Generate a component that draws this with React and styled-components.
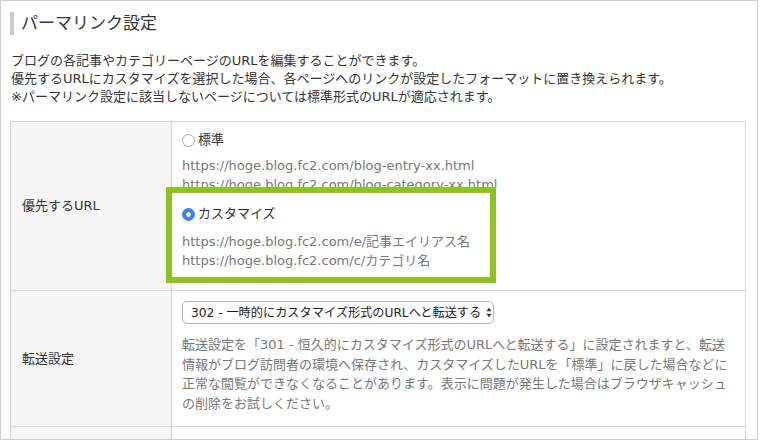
import React from 'react';
import styled, { createGlobalStyle, css } from 'styled-components';

const GlobalStyle = createGlobalStyle`
  body {
    margin: 0;
    background: #fff;
    color: #333;
    font-family: "DejaVu Sans", "Noto Sans CJK JP", sans-serif;
  }
`;

const Frame = styled.div`
  width: 758px;
  height: 440px;
  box-sizing: border-box;
  border: 1px solid #cdcdcd;
  padding: 11px 12px 0 9px;
  overflow: hidden;
`;

const Title = styled.h1`
  display: flex;
  align-items: center;
  gap: 7px;
  margin: 0;
  font-size: 17px;
  font-weight: normal;
  line-height: 23px;
  color: #333;

  &::before {
    content: '';
    width: 4px;
    height: 23px;
    background: #cccccc;
  }
`;

const Intro = styled.p`
  margin: 17px 0 0 1px;
  font-size: 13px;
  line-height: 18px;
`;

const Table = styled.table`
  width: 736px;
  margin-top: 15px;
  border-collapse: collapse;
  table-layout: fixed;
`;

const LabelCell = styled.th`
  width: 161px;
  box-sizing: border-box;
  padding: 0 11px 3px;
  border: 1px solid #d6d6d6;
  background: #f5f5f5;
  text-align: left;
  vertical-align: middle;
  font-size: 13px;
  font-weight: normal;
  color: #333;
`;

const ValueCell = styled.td`
  padding: ${({ $pad }) => $pad};
  border: 1px solid #d6d6d6;
  vertical-align: top;
`;

const Option = styled.div`
  position: relative;
  z-index: 0;
  margin-top: ${({ $gap }) => $gap || 0}px;

  ${({ $highlight }) =>
    $highlight &&
    css`
      &::before {
        content: '';
        position: absolute;
        left: -16px;
        top: -17px;
        width: 330px;
        height: 96px;
        box-sizing: border-box;
        border: 6px solid #8dc21f;
        background: #fff;
        z-index: -1;
      }
    `}
`;

const RadioLabel = styled.label`
  display: flex;
  align-items: center;
  gap: 3px;
  font-size: 13px;
  line-height: 20px;
  color: #333;
`;

const Radio = styled.input.attrs({ type: 'radio' })`
  appearance: none;
  width: 13px;
  height: 13px;
  margin: 0;
  border: 1px solid #a8a8a8;
  border-radius: 50%;
  background: #fff;

  &:checked {
    border-color: #3a82f7;
    background: radial-gradient(circle, #fff 0 2px, #3a82f7 2.6px);
  }
`;

const Urls = styled.div`
  margin-top: ${({ $gap }) => $gap}px;
  font-size: 13px;
  line-height: 19px;
  color: #777;
`;

const SelectWrap = styled.div`
  position: relative;
  display: inline-block;
`;

const Select = styled.select`
  appearance: none;
  height: 23px;
  padding: 0 10px 0 8px;
  border: 1px solid #b3b3b3;
  border-radius: 5px;
  background: #fff;
  font-family: inherit;
  font-size: 12.2px;
  color: #222;
`;

const Arrows = styled.svg`
  position: absolute;
  right: 2px;
  top: 6px;
  pointer-events: none;
`;

const Note = styled.p`
  margin: 11px 0 0;
  font-size: 13px;
  line-height: 19.5px;
  color: #777;
`;

const App = () => (
  <>
    <GlobalStyle />
    <Frame>
      <Title>パーマリンク設定</Title>
      <Intro>
        ブログの各記事やカテゴリーページのURLを編集することができます。
        <br />
        優先するURLにカスタマイズを選択した場合、各ページへのリンクが設定したフォーマットに置き換えられます。
        <br />
        ※パーマリンク設定に該当しないページについては標準形式のURLが適応されます。
      </Intro>
      <Table>
        <tbody>
          <tr>
            <LabelCell>優先するURL</LabelCell>
            <ValueCell $pad="8px 16px 20px 10px">
              <Option>
                <RadioLabel>
                  <Radio name="permalink" value="default" />
                  標準
                </RadioLabel>
                <Urls $gap={6}>
                  https://hoge.blog.fc2.com/blog-entry-xx.html
                  <br />
                  https://hoge.blog.fc2.com/blog-category-xx.html
                </Urls>
              </Option>
              <Option $gap={10} $highlight>
                <RadioLabel>
                  <Radio name="permalink" value="custom" defaultChecked />
                  カスタマイズ
                </RadioLabel>
                <Urls $gap={8}>
                  https://hoge.blog.fc2.com/e/記事エイリアス名
                  <br />
                  https://hoge.blog.fc2.com/c/カテゴリ名
                </Urls>
              </Option>
            </ValueCell>
          </tr>
          <tr>
            <LabelCell>転送設定</LabelCell>
            <ValueCell $pad="10px 16px 13px 10px">
              <SelectWrap>
                <Select defaultValue="302">
                  <option value="302">302 - 一時的にカスタマイズ形式のURLへと転送する</option>
                  <option value="301">301 - 恒久的にカスタマイズ形式のURLへと転送する</option>
                </Select>
                <Arrows width="6" height="11" viewBox="0 0 6 11">
                  <path d="M3 0.8 L5.6 4.3 H0.4 Z" fill="#333" />
                  <path d="M3 10.2 L5.6 6.7 H0.4 Z" fill="#333" />
                </Arrows>
              </SelectWrap>
              <Note>
                転送設定を「301 - 恒久的にカスタマイズ形式のURLへと転送する」に設定されますと、転送
                <br />
                情報がブログ訪問者の環境へ保存され、カスタマイズしたURLを「標準」に戻した場合などに
                <br />
                正常な閲覧ができなくなることがあります。表示に問題が発生した場合はブラウザキャッシュ
                <br />
                の削除をお試しください。
              </Note>
            </ValueCell>
          </tr>
          <tr>
            <LabelCell>&nbsp;</LabelCell>
            <ValueCell $pad="20px 16px 20px 10px" />
          </tr>
        </tbody>
      </Table>
    </Frame>
  </>
);

export default App;
